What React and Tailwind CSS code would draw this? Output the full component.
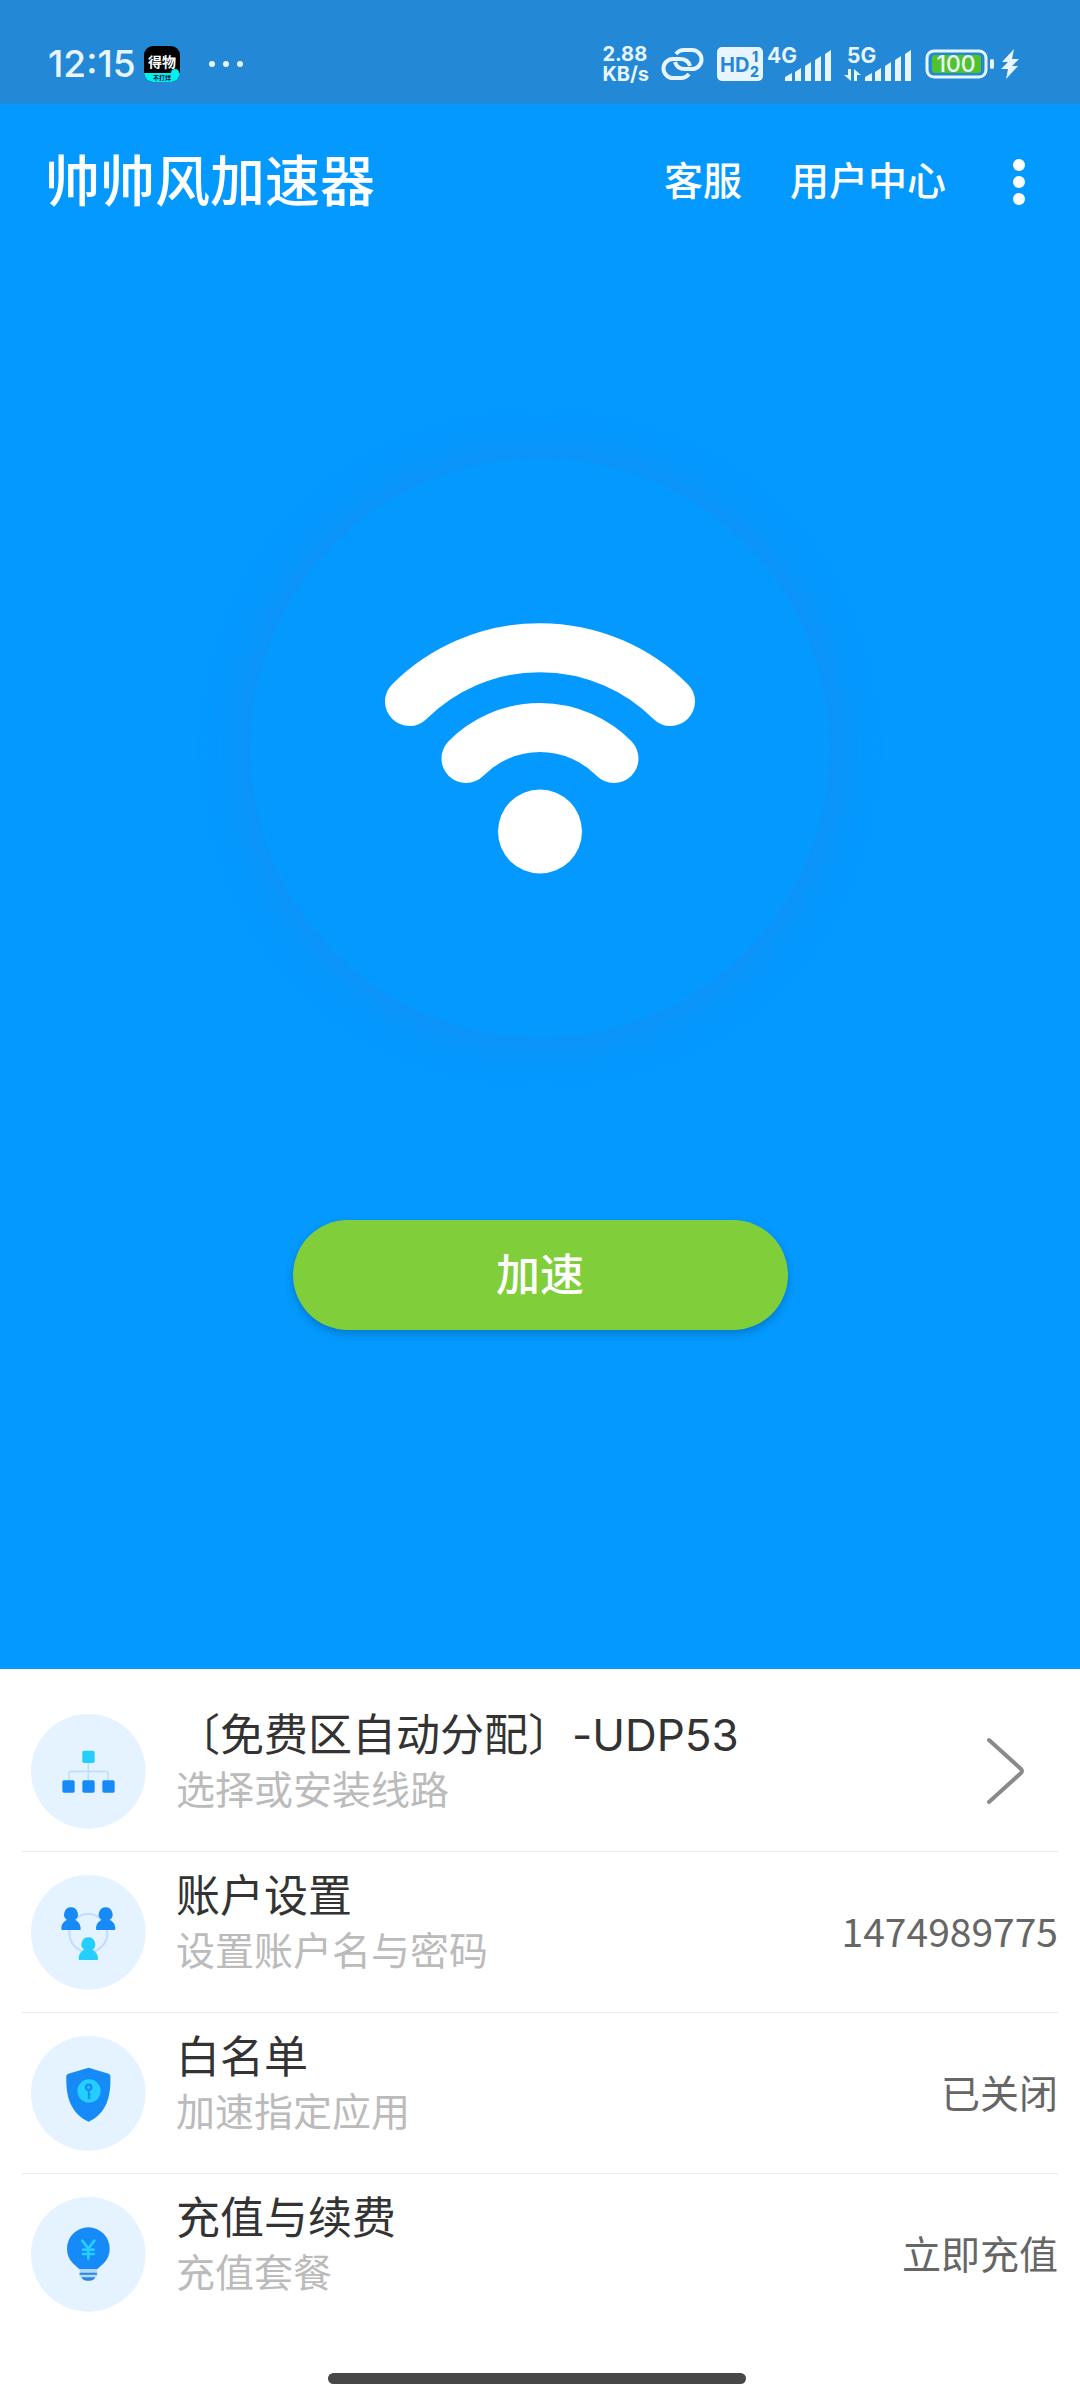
const LINES_ICON = (
  <>
    <path d="M172 146V200M114 200V178Q114 172 120 172H225Q231 172 231 178V200" fill="none" stroke="#c0ddfd" strokeWidth="5" />
    <rect x="154" y="110" width="37" height="37" rx="5" fill="#24ceff" />
    <rect x="94" y="199" width="37" height="37" rx="5" fill="#168af6" />
    <rect x="154" y="199" width="37" height="37" rx="5" fill="#168af6" />
    <rect x="214" y="199" width="37" height="37" rx="5" fill="#168af6" />
  </>
);

const PERSON = 'M0 -21a21 21 0 0 1 12 38c10 4 17 13 17 26q0 4 -3 4h-52q-3 0 -3 -4c0 -13 7 -22 17 -26a21 21 0 0 1 12 -38z';

const ACCOUNT_ICON = (
  <>
    <circle cx="172" cy="174" r="57" fill="none" stroke="#c0ddfd" strokeWidth="6" />
    <path d={PERSON} transform="translate(120 118)" fill="#168af6" />
    <path d={PERSON} transform="translate(224 118)" fill="#168af6" />
    <path d={PERSON} transform="translate(172 208)" fill="#24ceff" />
  </>
);

const SHIELD_ICON = (
  <>
    <path d="M173 95L233 113Q238 115 238 120C240 180 228 232 173 257C118 232 104 180 106 120Q106 115 112 113Z" fill="#168af6" />
    <circle cx="174" cy="165" r="35" fill="#24ceff" />
    <circle cx="173" cy="154" r="8" fill="none" stroke="#168af6" strokeWidth="7" />
    <path d="M173 162V188M173 176H179M173 185H179" stroke="#168af6" strokeWidth="5" />
  </>
);

const BULB_ICON = (
  <>
    <path d="M146 217C132 203 108 190 108 155A64 64 0 0 1 236 155C236 190 212 203 198 217Z" fill="#168af6" />
    <path d="M146 217H198V238L186 246H158L146 238Z" fill="#b3dafd" />
    <path d="M148 230H196" stroke="#2a86e0" strokeWidth="6" strokeLinecap="round" />
    <path d="M151 241H193Q188 251 178 251H166Q156 251 151 241Z" fill="#2a86e0" />
    <path d="M154 131L172 155L190 131M172 155V185M156 158H188M156 171H188" fill="none" stroke="#24ceff" strokeWidth="8" strokeLinecap="round" />
  </>
);

const ROWS = [
  { title: '〔免费区自动分配〕-UDP53', sub: '选择或安装线路', icon: LINES_ICON },
  { title: '账户设置', sub: '设置账户名与密码', value: '1474989775', icon: ACCOUNT_ICON },
  { title: '白名单', sub: '加速指定应用', value: '已关闭', icon: SHIELD_ICON },
  { title: '充值与续费', sub: '充值套餐', value: '立即充值', icon: BULB_ICON },
];

function Signal({ label, arrows }) {
  return (
    <svg className="overflow-visible" width="68" height="36" viewBox="0 0 68 36" fill="currentColor">
      <text x="0" y="17" fontSize="21" fontWeight="700">{label}</text>
      {arrows && <path d="M4 23V35L-3 29H1V23ZM7 35V23L14 29H10V35Z" />}
      <path d="M18 31L25 27V35H18ZM28 26L34 22V35H28ZM38 20L44 16V35H38ZM48 14L54 10V35H48ZM58 8L64 4V35H58Z" />
    </svg>
  );
}

function StatusBar() {
  return (
    <div className="flex h-[104px] items-center bg-[#2388d6] pt-6 pr-[61px] pl-12 text-[#e8f5ff]">
      <span className="text-[37px] leading-10 font-medium">12:15</span>
      <svg className="ml-2" width="36" height="36" viewBox="0 0 36 36">
        <rect width="36" height="36" rx="9" fill="#000" />
        <path d="M0 27H36A9 9 0 0 1 27 36H9A9 9 0 0 1 0 27Z" fill="#00f0f0" />
        <circle cx="31" cy="27" r="4" fill="#00f0f0" />
        <text x="18" y="21" fontSize="14" fontWeight="700" textAnchor="middle" fill="#fff">得物</text>
        <text x="18" y="34" fontSize="6" fontWeight="700" textAnchor="middle" fill="#003">不打烊</text>
      </svg>
      <svg className="ml-7" width="36" height="8" viewBox="0 0 36 8" fill="currentColor">
        <circle cx="4" cy="4" r="3" />
        <circle cx="18" cy="4" r="3" />
        <circle cx="32" cy="4" r="3" />
      </svg>

      <div className="ml-auto flex items-center">
        <div className="text-[20px] leading-5 font-bold">
          <p>2.88</p>
          <p>KB/s</p>
        </div>
        <svg className="ml-3" width="44" height="34" viewBox="0 0 44 34" fill="none" stroke="currentColor" strokeWidth="4">
          <path d="M15 7Q18 3 23 3H31A9 9 0 0 1 31 22H24Q16 22 14 15" />
          <path d="M28 27Q25 31 20 31H12A9 9 0 0 1 12 12H19Q27 12 29 19" />
        </svg>
        <svg className="ml-3" width="46" height="34" viewBox="0 0 46 34">
          <rect width="46" height="34" rx="5" fill="currentColor" />
          <text x="3" y="25" fontSize="20" fontWeight="700" fill="#2388d6">HD</text>
          <text x="35" y="15" fontSize="14" fontWeight="800" fill="#2388d6">1</text>
          <text x="33" y="30" fontSize="14" fontWeight="800" fill="#2388d6">2</text>
        </svg>
        <div className="ml-1 flex gap-3">
          <Signal label="4G" />
          <Signal label="5G" arrows />
        </div>
        <svg className="ml-2.5" width="70" height="30" viewBox="0 0 70 30">
          <rect x="2" y="2" width="59" height="26" rx="7" fill="none" stroke="currentColor" strokeWidth="3" />
          <rect x="7" y="6" width="49" height="18" rx="3" fill="#52c22b" />
          <path d="M67 12V18" stroke="currentColor" strokeWidth="4" strokeLinecap="round" />
          <text x="31" y="23" fontSize="23" fontWeight="500" textAnchor="middle" fill="currentColor">100</text>
        </svg>
        <svg className="ml-1.5" width="18" height="30" viewBox="0 0 18 30" fill="currentColor">
          <path d="M13 0L1 13H7L0 20H7L5 30L17 17H11L18 10H11Z" />
        </svg>
      </div>
    </div>
  );
}

function Row({ row }) {
  return (
    <li className="border-b border-[#ececec] last:border-0">
      <button type="button" className="flex h-40 w-full items-center pl-[9px] text-left">
        <svg className="shrink-0" width="115" height="115" viewBox="0 0 345 345">
          <circle cx="172" cy="172" r="172" fill="#e5f2ff" />
          {row.icon}
        </svg>
        <span className="ml-[30px] flex flex-1 flex-col pb-[18px]">
          <span className="text-[44px] leading-14 text-[#333]">{row.title}</span>
          <span className="text-[39px] leading-[54px] text-[#bbb]">{row.sub}</span>
        </span>
        {row.value ? (
          <span className="pb-1 font-['Noto_Sans_CJK_SC',sans-serif] text-[39px] leading-14 text-[#666]">{row.value}</span>
        ) : (
          <svg className="mr-8" width="40" height="70" viewBox="0 0 40 70" fill="none" stroke="#8a8a8a" strokeWidth="4" strokeLinecap="round">
            <path d="M3 4L35 33Q37 35 35 37L3 66" />
          </svg>
        )}
      </button>
    </li>
  );
}

export default function App() {
  return (
    <div className="flex min-h-screen flex-col bg-white font-['Inter','Noto_Sans_CJK_SC',sans-serif]">
      <main className="flex flex-1 flex-col bg-[#0499ff] text-white">
        <StatusBar />
        <header className="flex h-[155px] items-center pr-[50px] pl-[45px] font-medium">
          <h1 className="text-[55px] leading-none">帅帅风加速器</h1>
          <nav className="ml-auto flex items-center text-[39px]">
            <button type="button">客服</button>
            <button type="button" className="ml-12">用户中心</button>
            <button type="button" aria-label="更多" className="ml-[62px]">
              <svg width="22" height="46" viewBox="0 0 22 46" fill="currentColor">
                <circle cx="11" cy="6" r="6" />
                <circle cx="11" cy="23" r="6" />
                <circle cx="11" cy="40" r="6" />
              </svg>
            </button>
          </nav>
        </header>

        <div className="flex flex-1 flex-col items-center pt-[199px]">
          <div className="flex size-[580px] items-center justify-center rounded-full bg-[#0499ff] shadow-[0_0_40px_8px_#1391f5]">
            <svg width="310" height="252" viewBox="0 0 310 252" fill="none" stroke="#fff" strokeWidth="49" strokeLinecap="round">
              <path d="M24.5 79.5A185 185 0 0 1 285.5 79.5" />
              <path d="M81 136.500A104 104 0 0 1 229 136.500" />
              <circle cx="155" cy="209.500" r="42" fill="#fff" stroke="none" />
            </svg>
          </div>
          <button
            type="button"
            className="mt-[182px] h-[110px] w-[495px] rounded-full bg-[#81ce3b] text-[44px] font-medium shadow-[0_4px_8px_rgba(0,0,0,0.2)]"
          >
            加速
          </button>
        </div>
      </main>

      <ul className="mx-[22px] mt-[22px]">
        {ROWS.map((row) => <Row key={row.title} row={row} />)}
      </ul>
      <div className="flex justify-center pt-[39px] pr-1.5 pb-4">
        <div className="h-[11px] w-[418px] rounded-full bg-[#474747]" />
      </div>
    </div>
  );
}
